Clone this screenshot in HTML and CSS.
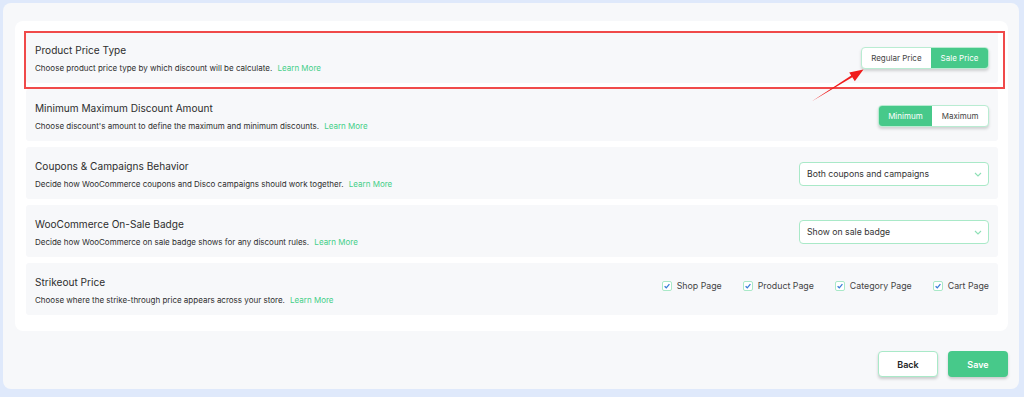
FILE: index.html
```html
<!DOCTYPE html>
<html>
<head>
<meta charset="utf-8">
<link rel="stylesheet" href="styles.css">
</head>
<body>
<div class="panel">
  <div class="card">
    <div class="row row-marked">
      <div class="info">
        <div class="title">Product Price Type</div>
        <div class="desc">Choose product price type by which discount will be calculate. <a class="more">Learn More</a></div>
      </div>
      <div class="seg">
        <span class="opt">Regular Price</span><span class="opt on">Sale Price</span>
      </div>
    </div>
    <div class="row">
      <div class="info">
        <div class="title">Minimum Maximum Discount Amount</div>
        <div class="desc">Choose discount's amount to define the maximum and minimum discounts. <a class="more">Learn More</a></div>
      </div>
      <div class="seg">
        <span class="opt on">Minimum</span><span class="opt">Maximum</span>
      </div>
    </div>
    <div class="row">
      <div class="info">
        <div class="title">Coupons &amp; Campaigns Behavior</div>
        <div class="desc">Decide how WooCommerce coupons and Disco campaigns should work together. <a class="more">Learn More</a></div>
      </div>
      <div class="select">
        <span>Both coupons and campaigns</span>
        <svg class="chev" width="8" height="5" viewBox="0 0 8 5"><path d="M1 1 L4 4 L7 1" fill="none" stroke="#8ee0b6" stroke-width="1.1"/></svg>
      </div>
    </div>
    <div class="row">
      <div class="info">
        <div class="title">WooCommerce On-Sale Badge</div>
        <div class="desc">Decide how WooCommerce on sale badge shows for any discount rules. <a class="more">Learn More</a></div>
      </div>
      <div class="select">
        <span>Show on sale badge</span>
        <svg class="chev" width="8" height="5" viewBox="0 0 8 5"><path d="M1 1 L4 4 L7 1" fill="none" stroke="#8ee0b6" stroke-width="1.1"/></svg>
      </div>
    </div>
    <div class="row">
      <div class="info">
        <div class="title">Strikeout Price</div>
        <div class="desc">Choose where the strike-through price appears across your store. <a class="more">Learn More</a></div>
      </div>
      <div class="checks">
        <label class="check"><span class="box"><svg width="8" height="8" viewBox="0 0 8 8"><path d="M1.6 4.2 L3.3 5.8 L6.4 2.2" fill="none" stroke="#3b7dd8" stroke-width="1.3"/></svg></span>Shop Page</label>
        <label class="check"><span class="box"><svg width="8" height="8" viewBox="0 0 8 8"><path d="M1.6 4.2 L3.3 5.8 L6.4 2.2" fill="none" stroke="#3b7dd8" stroke-width="1.3"/></svg></span>Product Page</label>
        <label class="check"><span class="box"><svg width="8" height="8" viewBox="0 0 8 8"><path d="M1.6 4.2 L3.3 5.8 L6.4 2.2" fill="none" stroke="#3b7dd8" stroke-width="1.3"/></svg></span>Category Page</label>
        <label class="check"><span class="box"><svg width="8" height="8" viewBox="0 0 8 8"><path d="M1.6 4.2 L3.3 5.8 L6.4 2.2" fill="none" stroke="#3b7dd8" stroke-width="1.3"/></svg></span>Cart Page</label>
      </div>
    </div>
  </div>
  <div class="actions">
    <button class="btn back">Back</button>
    <button class="btn save">Save</button>
  </div>
</div>
<svg class="arrow" width="1024" height="397" viewBox="0 0 1024 397">
  <polygon points="811.5,101.5 852.3,77.3 854.8,81.2 863.5,69.5 849.2,72.4 851.2,75.6" fill="#f01d1d"/>
</svg>
</body>
</html>
```
FILE: styles.css
```css
* { box-sizing: border-box; }
html, body { margin: 0; }
body {
  background: #dfe9fb;
  font-family: Inter, "Noto Sans", sans-serif;
  color: #333;
  width: 1024px;
  height: 397px;
  padding: 3px 5px 8px 3px;
  position: relative;
  overflow: hidden;
}
.panel {
  background: #f7f8fa;
  border-radius: 8px;
  height: 386px;
  padding: 18px 11px 12px 12px;
  display: flex;
  flex-direction: column;
}
.card {
  background: #fff;
  border-radius: 8px;
  padding: 10px 10px 16px 11px;
  display: flex;
  flex-direction: column;
  gap: 6px;
}
.row {
  background: #f7f8fa;
  border-radius: 3px;
  height: 52px;
  display: flex;
  justify-content: space-between;
  align-items: flex-start;
  padding: 13px 9px 0 9px;
  position: relative;
}
.row-marked::after {
  content: "";
  position: absolute;
  left: -2px;
  right: -7px;
  top: 0;
  bottom: -6px;
  border: 2px solid #f04a4a;
}
.title {
  font-size: 10.1px;
  line-height: 13px;
  color: #2e2e2e;
}
.desc {
  font-size: 8px;
  line-height: 11px;
  margin-top: 6px;
  color: #2e2e2e;
}
.more {
  color: #44cf88;
  margin-left: 3px;
}
.seg {
  margin-top: 3px;
  display: flex;
  height: 22px;
  border: 1px solid #b9ecd2;
  border-radius: 4px;
  overflow: hidden;
  box-shadow: 0 2px 3px rgba(0,0,0,0.16);
  background: #fff;
}
.opt {
  font-size: 8px;
  padding: 0 9.5px;
  display: flex;
  align-items: center;
  color: #444;
}
.opt.on {
  background: #47c98a;
  color: #fff;
}
.select {
  margin-top: 2px;
  width: 190px;
  height: 24px;
  border: 1px solid #a9e9c8;
  border-radius: 4px;
  background: #fff;
  display: flex;
  align-items: center;
  justify-content: space-between;
  padding: 0 6px 0 7px;
  font-size: 8.7px;
  color: #333;
}
.checks {
  margin-top: 4px;
  display: flex;
  gap: 21px;
}
.check {
  display: flex;
  align-items: center;
  gap: 5px;
  font-size: 8.8px;
  color: #444;
}
.box {
  width: 10px;
  height: 10px;
  border: 1px solid #a9e9c8;
  border-radius: 2px;
  background: #fff;
  display: flex;
  align-items: center;
  justify-content: center;
}
.actions {
  margin-top: 20px;
  display: flex;
  justify-content: flex-end;
  gap: 10px;
}
.btn {
  width: 60px;
  height: 26px;
  border-radius: 4px;
  font-family: Inter, "Noto Sans", sans-serif;
  font-size: 9px;
  font-weight: 600;
  box-shadow: 0 2px 3px rgba(0,0,0,0.18);
  padding: 0;
}
.back {
  background: #fff;
  border: 1px solid #a9e9c8;
  color: #222;
}
.save {
  background: #47c98a;
  border: none;
  color: #fff;
}
.arrow {
  position: absolute;
  left: 0;
  top: 0;
  pointer-events: none;
}
```
